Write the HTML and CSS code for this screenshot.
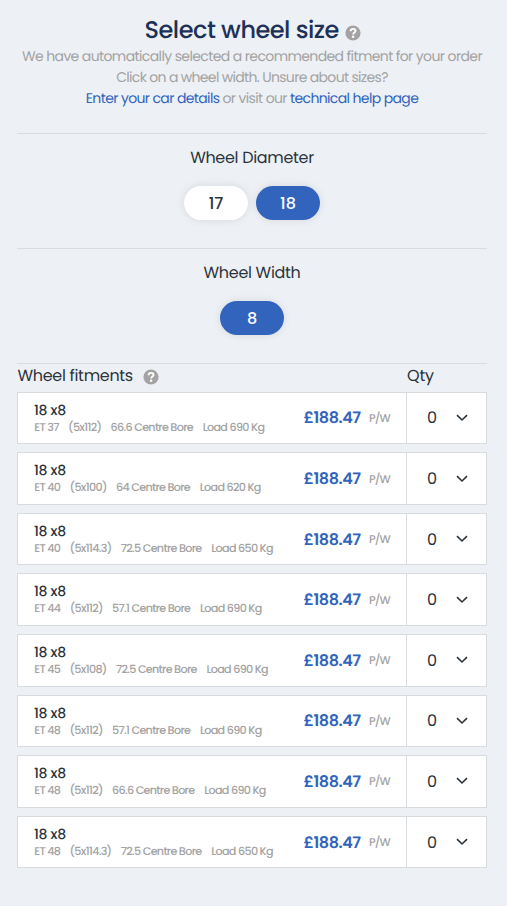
FILE: index.html
```
<!DOCTYPE html>
<html lang="en">
<head>
<meta charset="utf-8">
<title>Select wheel size</title>
<link rel="stylesheet" href="styles.css">
</head>
<body>
<svg width="0" height="0" class="defs" aria-hidden="true">
  <symbol id="help" viewBox="0 0 16 16"><circle cx="8" cy="8" r="7.6" fill="#a3a3a3"/><path d="M5.6 6.2C5.7 4.7 6.7 3.9 8.1 3.9c1.4 0 2.4.8 2.4 2 0 1.7-2.3 1.7-2.3 3.5" fill="none" stroke="#fff" stroke-width="1.9"/><circle cx="8.1" cy="11.8" r="1.25" fill="#fff"/></symbol>
  <symbol id="chevron" viewBox="0 0 12 8"><path d="M1 1.2 6 6 11 1.2" fill="none" stroke="#2b343b" stroke-width="1.6"/></symbol>
</svg>
<main class="page">
  <header class="intro">
    <h1><span>Select wheel size</span><svg class="help"><use href="#help"/></svg></h1>
    <p>We have automatically selected a recommended fitment for your order</p>
    <p class="hint">Click on a wheel width. Unsure about sizes?</p>
    <p class="links"><a>Enter your car details</a> or visit our <a>technical help page</a></p>
  </header>
  <section class="choice">
    <h2>Wheel Diameter</h2>
    <div class="pills"><button>17</button><button class="on">18</button></div>
  </section>
  <section class="choice">
    <h2>Wheel Width</h2>
    <div class="pills"><button class="on">8</button></div>
  </section>
  <section class="fitments">
    <div class="heading"><h2>Wheel fitments</h2><svg class="help"><use href="#help"/></svg><span class="qty-label">Qty</span></div>
    <div class="rows">
      <article class="row"><div class="info"><h3>18 x8</h3><div class="specs"><span>ET 37</span><span>(5x112)</span><span>66.6 Centre Bore</span><span>Load 690 Kg</span></div></div><strong>£188.47</strong><small>P/W</small><div class="qty"><span>0</span><svg><use href="#chevron"/></svg></div></article>
      <article class="row"><div class="info"><h3>18 x8</h3><div class="specs"><span>ET 40</span><span>(5x100)</span><span>64 Centre Bore</span><span>Load 620 Kg</span></div></div><strong>£188.47</strong><small>P/W</small><div class="qty"><span>0</span><svg><use href="#chevron"/></svg></div></article>
      <article class="row"><div class="info"><h3>18 x8</h3><div class="specs"><span>ET 40</span><span>(5x114.3)</span><span>72.5 Centre Bore</span><span>Load 650 Kg</span></div></div><strong>£188.47</strong><small>P/W</small><div class="qty"><span>0</span><svg><use href="#chevron"/></svg></div></article>
      <article class="row"><div class="info"><h3>18 x8</h3><div class="specs"><span>ET 44</span><span>(5x112)</span><span>57.1 Centre Bore</span><span>Load 690 Kg</span></div></div><strong>£188.47</strong><small>P/W</small><div class="qty"><span>0</span><svg><use href="#chevron"/></svg></div></article>
      <article class="row"><div class="info"><h3>18 x8</h3><div class="specs"><span>ET 45</span><span>(5x108)</span><span>72.5 Centre Bore</span><span>Load 690 Kg</span></div></div><strong>£188.47</strong><small>P/W</small><div class="qty"><span>0</span><svg><use href="#chevron"/></svg></div></article>
      <article class="row"><div class="info"><h3>18 x8</h3><div class="specs"><span>ET 48</span><span>(5x112)</span><span>57.1 Centre Bore</span><span>Load 690 Kg</span></div></div><strong>£188.47</strong><small>P/W</small><div class="qty"><span>0</span><svg><use href="#chevron"/></svg></div></article>
      <article class="row"><div class="info"><h3>18 x8</h3><div class="specs"><span>ET 48</span><span>(5x112)</span><span>66.6 Centre Bore</span><span>Load 690 Kg</span></div></div><strong>£188.47</strong><small>P/W</small><div class="qty"><span>0</span><svg><use href="#chevron"/></svg></div></article>
      <article class="row"><div class="info"><h3>18 x8</h3><div class="specs"><span>ET 48</span><span>(5x114.3)</span><span>72.5 Centre Bore</span><span>Load 650 Kg</span></div></div><strong>£188.47</strong><small>P/W</small><div class="qty"><span>0</span><svg><use href="#chevron"/></svg></div></article>
    </div>
  </section>
</main>
</body>
</html>
```
FILE: styles.css
```
* { box-sizing: border-box; margin: 0; padding: 0; }
body { background: #edf0f5; color: #2b343b; font-family: Poppins, Inter, sans-serif; overflow: hidden; text-rendering: geometricPrecision; }
.defs { display: none; }
.page { width: 470px; margin-left: 17px; padding-top: 15px; }
.intro { height: 118px; text-align: center; white-space: nowrap; }
h1 { display: flex; justify-content: center; align-items: center; gap: 6px; height: 31px; padding-left: 1.5px; color: #1d3158; font-size: 24px; font-weight: 500; letter-spacing: -0.5px; }
.help { width: 16px; height: 16px; flex: none; }
h1 .help { margin-top: 4px; }
.intro p { color: #a3a3a3; font-size: 14px; line-height: 21px; letter-spacing: -0.61px; }
.intro .hint { letter-spacing: -0.67px; }
.intro .links { letter-spacing: -0.63px; }
.intro a { color: #3264bd; }
.choice { height: 115px; border-top: 1px solid #d9dde0; padding-top: 12px; }
h2 { font-size: 16px; font-weight: 400; line-height: 24px; letter-spacing: -0.31px; text-align: center; }
.pills { display: flex; justify-content: center; gap: 8px; margin-top: 16px; }
button { width: 64px; height: 34px; border: 0; border-radius: 17px; background: #fff; color: #2b343b; font: 500 16px Poppins, Inter, sans-serif; box-shadow: 0 0 8px rgba(0,0,0,.1); }
button.on { background: #3264bd; color: #fff; }
.fitments { border-top: 1px solid #d9dde0; }
.heading { display: flex; align-items: center; height: 24px; }
.heading h2 { padding-left: 0.5px; }
.heading .help { margin: 1px 0 0 10px; }
.qty-label { margin-left: auto; width: 80px; font-size: 16px; line-height: 24px; height: 24px; letter-spacing: -0.2px; }
.rows { display: grid; gap: 8px; margin-top: 3.7px; }
.row { display: flex; align-items: center; height: 52.58px; border: 1px solid #d9dcdf; background: #fff; }
.info { width: 285.5px; padding: 1.5px 0 0 16px; flex: none; white-space: nowrap; }
h3 { font-size: 14px; font-weight: 500; line-height: 17px; letter-spacing: -0.3px; }
.specs { display: flex; gap: 9.8px; padding-left: 0.3px; color: #a3a3a3; font-size: 11.2px; font-weight: 500; line-height: 17px; letter-spacing: -0.7px; }
.specs span:nth-child(2) { margin: 0 -0.5px; }
strong { width: 65.5px; color: #3264bd; font-size: 16px; font-weight: 600; letter-spacing: -0.45px; }
small { color: #a3a3a3; font-size: 11.2px; font-weight: 500; letter-spacing: -1px; padding-top: 1px; }
.qty { display: flex; align-items: center; width: 80px; height: 100%; margin-left: auto; padding-left: 20px; border-left: 1px solid #d9dcdf; font-size: 16px; }
.qty svg { width: 12px; height: 8px; margin-left: 19px; }
```
